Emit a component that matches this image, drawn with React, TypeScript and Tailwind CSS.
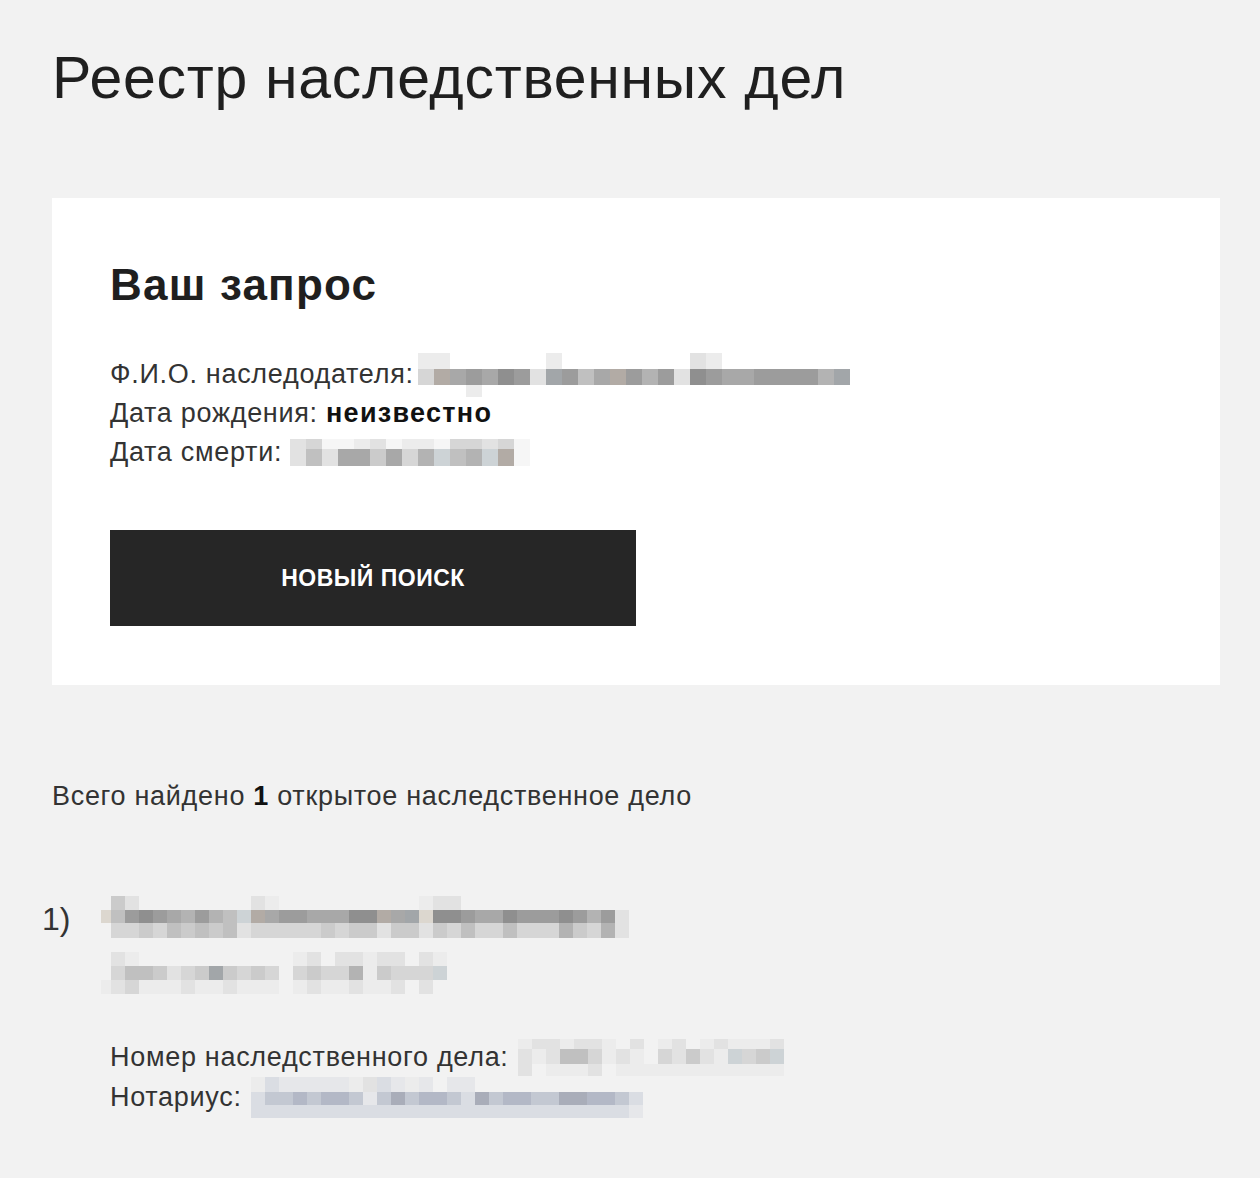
import React from "react";

const PAL: Record<string, string> = {
  ".": "",
  a: "bg-[#f6f6f6]",
  b: "bg-[#ececec]",
  c: "bg-[#e2e2e2]",
  d: "bg-[#d6d6d6]",
  e: "bg-[#cbcbcb]",
  f: "bg-[#c0c0c0]",
  g: "bg-[#b3b3b3]",
  h: "bg-[#a8a8a8]",
  i: "bg-[#9c9c9c]",
  j: "bg-[#8f8f8f]",
  k: "bg-[#dcd7cf]",
  l: "bg-[#b2aba5]",
  m: "bg-[#cdd3d6]",
  n: "bg-[#a2a6a9]",
  p: "bg-[#c3c8d2]",
  q: "bg-[#b3b8c6]",
  r: "bg-[#dadde3]",
  s: "bg-[#e6e7ea]",
  t: "bg-[#a9adb9]",
};

type Row = { h: string; c: string };

function Mosaic({ rows, w, first, className = "" }: { rows: Row[]; w: string; first?: string; className?: string }) {
  return (
    <div className={`flex shrink-0 flex-col ${className}`} aria-hidden="true">
      {rows.map((r, ri) => (
        <div key={ri} className="flex">
          {r.c.split("").map((ch, ci) => (
            <div key={ci} className={`${ci === 0 && first ? first : w} ${r.h} ${PAL[ch]}`} />
          ))}
        </div>
      ))}
    </div>
  );
}

const FIO: Row[] = [
  { h: "h-[16px]", c: "bb......b........cb........" },
  { h: "h-[16px]", c: "dlhihjicnifhligicjihhiiiign" },
  { h: "h-[12px]", c: "...b......................." },
];

const DEATH: Row[] = [
  { h: "h-[10px]", c: "cdaabcabbaddcda" },
  { h: "h-[17px]", c: "cfchhehdgmfgmla" },
];

const NAME1: Row[] = [
  { h: "h-[14px]", c: ".ec........cb..........bcc............" },
  { h: "h-[13px]", c: "kfijihgigfmlhiihhhjjlhnkjjihhjiiijigic" },
  { h: "h-[15px]", c: ".ddedfefefcdddddedeeceecedfddfdddgedgc" },
];

const NAME2: Row[] = [
  { h: "h-[14px]", c: ".cb...........bc.ccbcc.cb" },
  { h: "h-[14px]", c: ".dffecdeneded.deddgbedddm" },
  { h: "h-[14px]", c: "bcdbbbcbbcbbb.bcbbcbbc.c." },
];

const CASENO: Row[] = [
  { h: "h-[10px]", c: "bccbccb.c.bc.bcbbbc" },
  { h: "h-[15px]", c: "cbcffdbcb.dcecbmdem" },
  { h: "h-[12px]", c: "c.bbbc.bbbbbbbbbbbb" },
];

const NOTARY: Row[] = [
  { h: "h-[15px]", c: "brsssssbcrsbs.ss............" },
  { h: "h-[13px]", c: "rppqpqqpsptpqqprtpqqppttqqpr" },
  { h: "h-[13px]", c: "rrrrrrrrrrrrrrrrrrrrrrrrrrrs" },
];

export default function App() {
  return (
    <div className="min-h-screen bg-[#f2f2f2] font-['Liberation_Sans',Arial,sans-serif] text-[#333333]">
      <div className="pb-[60px] pl-[52px] pr-[40px] pt-[45px]">
        <h1 className="text-[59px] font-normal leading-[66px] tracking-[0.7px] text-[#1f1f1f]">
          Реестр наследственных дел
        </h1>

        <section className="mt-[87px] bg-white pb-[59px] pl-[58px] pt-[63px]">
          <h2 className="text-[44px] font-bold leading-[48px] tracking-[1.2px] text-[#1f1f1f]">Ваш запрос</h2>
          <div className="mt-[46px] text-[27px] leading-[39px] tracking-[0.7px]">
            <div className="flex h-[39px] items-center">
              <span>Ф.И.О. наследодателя:</span>
              <Mosaic rows={FIO} w="w-[16px]" className="ml-[4px]" />
            </div>
            <div className="flex h-[39px] items-center">
              <span>
                Дата рождения: <b className="font-bold tracking-[1.3px] text-[#111111]">неизвестно</b>
              </span>
            </div>
            <div className="flex h-[39px] items-center">
              <span>Дата смерти:</span>
              <Mosaic rows={DEATH} w="w-[16px]" className="ml-[8px]" />
            </div>
          </div>
          <button
            type="button"
            className="mt-[58px] flex h-[96px] w-[526px] items-center justify-center bg-[#262626] text-[23px] font-bold tracking-[0.5px] text-white"
          >
            НОВЫЙ ПОИСК
          </button>
        </section>

        <p className="mt-[92px] text-[27px] leading-[39px] tracking-[0.7px]">
          Всего найдено <b className="font-bold text-[#111111]">1</b> открытое наследственное дело
        </p>

        <div className="-ml-[10px] mt-[80px] flex">
          <div className="w-[59px] shrink-0 pt-[3px] text-[32px] leading-[40px]">1)</div>
          <div>
            <Mosaic rows={NAME1} w="w-[14px]" first="w-[10px]" />
            <Mosaic rows={NAME2} w="w-[14px]" first="w-[10px]" className="mt-[14px]" />
            <div className="mt-[43px] pl-[9px] text-[27px] leading-[40px] tracking-[0.7px]">
              <div className="flex h-[40px] items-center">
                <span>Номер наследственного дела:</span>
                <Mosaic rows={CASENO} w="w-[14px]" className="ml-[9px]" />
              </div>
              <div className="flex h-[40px] items-center">
                <span>Нотариус:</span>
                <Mosaic rows={NOTARY} w="w-[14px]" className="ml-[9px]" />
              </div>
            </div>
          </div>
        </div>
      </div>
    </div>
  );
}
